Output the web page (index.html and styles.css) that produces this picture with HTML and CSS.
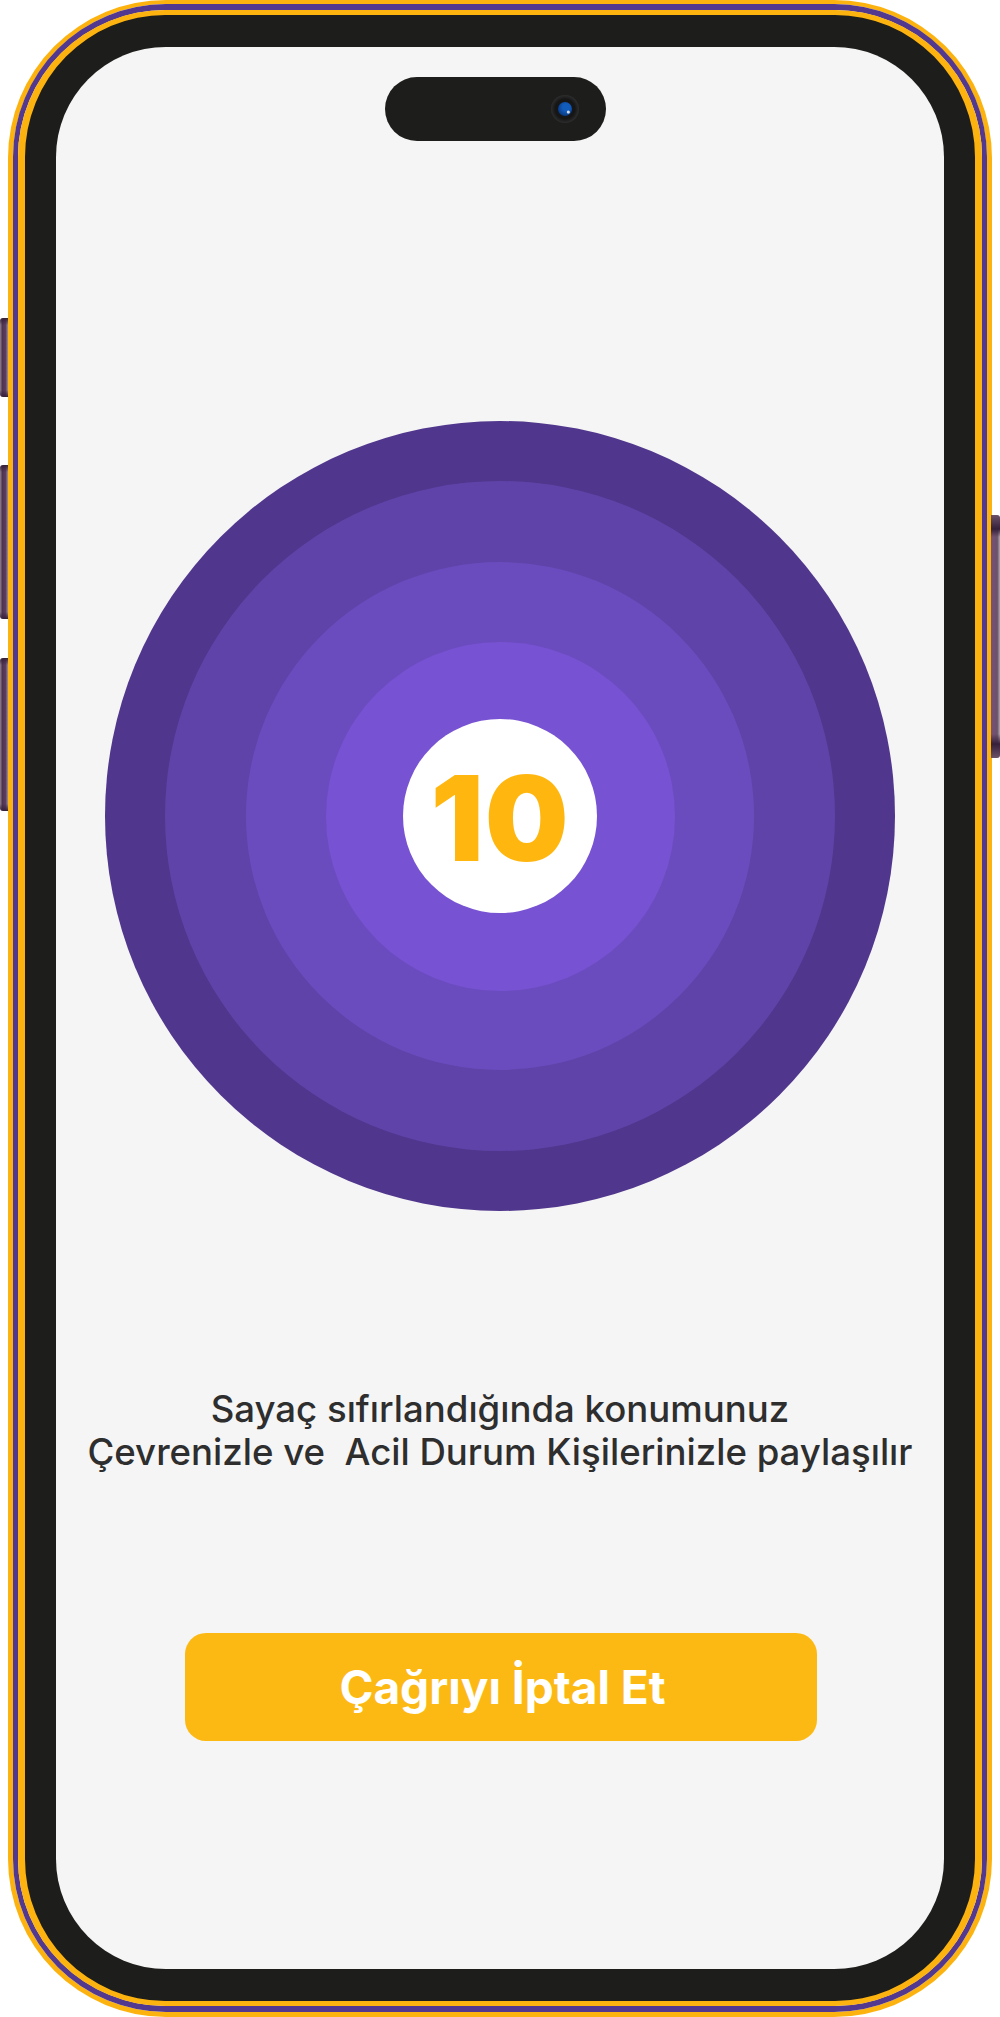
FILE: index.html
```html
<!DOCTYPE html>
<html lang="tr">
<head>
    <meta charset="UTF-8">
    <meta name="viewport" content="width=device-width, initial-scale=1.0">
    <title>Acil Durum Sayacı</title>
    <link rel="stylesheet" href="styles.css">
</head>
<body>
    <div class="device">
        <span class="side-btn side-mute"></span>
        <span class="side-btn side-vol-up"></span>
        <span class="side-btn side-vol-down"></span>
        <span class="side-btn side-power"></span>

        <div class="frame-outer">
            <div class="frame-mid">
                <div class="frame-inner">
                    <main class="screen">
                        <div class="notch">
                            <span class="camera"><span class="lens"></span></span>
                        </div>

                        <div class="ring ring-1">
                            <div class="ring ring-2">
                                <div class="ring ring-3">
                                    <div class="ring ring-4">
                                        <div class="ring counter">10</div>
                                    </div>
                                </div>
                            </div>
                        </div>

                        <p class="info">Sayaç sıfırlandığında konumunuz<br>Çevrenizle ve &nbsp;Acil Durum Kişilerinizle paylaşılır</p>

                        <button class="cancel-btn">Çağrıyı İptal Et</button>
                    </main>
                </div>
            </div>
        </div>
    </div>
</body>
</html>
```

FILE: styles.css
```css
* {
    box-sizing: border-box;
}
body {
    margin: 0;
    background-color: #fff;
    font-family: Inter, "Liberation Sans", sans-serif;
}
.device {
    position: relative;
    height: 2017px;
    padding: 0 8px;
}

/* Frame bands */
.frame-outer {
    height: 100%;
    border: solid #fdb30f;
    border-width: 4px 5px 5px 5px;
    border-radius: 158px;
}
.frame-mid {
    height: 100%;
    border: solid #52388f;
    border-width: 6px 5px 6px 5px;
    border-radius: 153px;
}
.frame-inner {
    height: 100%;
    padding: 32px 31px;
    background-color: #1d1d1b;
    border: solid #fdb30f;
    border-width: 5px 7px 5px 7px;
    border-radius: 147px;
}
.screen {
    display: flex;
    flex-direction: column;
    align-items: center;
    height: 100%;
    background-color: #f5f5f5;
    border-radius: 110px;
}

/* Side buttons */
.side-btn {
    position: absolute;
    left: 0;
    width: 8px;
    border-radius: 3px 0 0 3px;
    background:
        linear-gradient(to bottom, #35203a, transparent 7px, transparent calc(100% - 7px), #35203a),
        linear-gradient(to right, #8f8690, #4f3250 30%, #5d3d5f 70%, #9a929b);
}
.side-mute {
    top: 318px;
    height: 79px;
}
.side-vol-up {
    top: 465px;
    height: 154px;
}
.side-vol-down {
    top: 658px;
    height: 153px;
}
.side-power {
    left: auto;
    right: 0;
    top: 515px;
    width: 9px;
    height: 243px;
    border-radius: 0 3px 3px 0;
    background:
        linear-gradient(to bottom, #6b5269, #35203a 14px, transparent 22px, transparent calc(100% - 24px), #35203a calc(100% - 14px), #6b5269),
        linear-gradient(to right, #7a5078, #6b5269 70%, #b5adb3);
}

/* Notch */
.notch {
    display: flex;
    align-items: center;
    justify-content: flex-end;
    align-self: flex-start;
    width: 221px;
    height: 64px;
    margin: 30px 0 0 329px;
    padding-right: 27px;
    background-color: #1d1d1b;
    border-radius: 32px;
}
.camera {
    display: flex;
    align-items: center;
    justify-content: center;
    width: 28px;
    height: 28px;
    background: radial-gradient(circle, #161616 50%, #3f4042 88%, #2a2a2a);
    border-radius: 50%;
}
.lens {
    width: 14px;
    height: 14px;
    background:
        radial-gradient(circle at 74% 72%, #d5dce6 1px, transparent 2px),
        radial-gradient(circle at 58% 38%, #125cbc 30%, #0b4496 60%, #07234e);
    border-radius: 50%;
}

/* Countdown rings */
.ring {
    display: flex;
    align-items: center;
    justify-content: center;
    flex-shrink: 0;
    border-radius: 50%;
}
.ring-1 {
    width: 790px;
    height: 790px;
    margin-top: 280px;
    background-color: #50368c;
}
.ring-2 {
    width: 670px;
    height: 670px;
    background-color: #6043a8;
}
.ring-3 {
    width: 508px;
    height: 508px;
    background-color: #6b4cbf;
}
.ring-4 {
    width: 349px;
    height: 349px;
    background-color: #7752d2;
}
.counter {
    width: 194px;
    height: 194px;
    padding-top: 3px;
    background-color: #fff;
    color: #ffb60f;
    font-size: 118px;
    font-weight: 900;
    letter-spacing: 1px;
    line-height: 1;
}

.info {
    margin: 177px 0 0;
    color: #2e2e2e;
    font-size: 36.6px;
    font-weight: 500;
    line-height: 43px;
    text-align: center;
}
.cancel-btn {
    width: 632px;
    height: 108px;
    margin: 159px 0 0 2px;
    padding: 0 0 0 3px;
    border: none;
    border-radius: 21px;
    background-color: #fdb913;
    color: #fff;
    font-family: inherit;
    font-size: 46px;
    font-weight: 700;
}
```
